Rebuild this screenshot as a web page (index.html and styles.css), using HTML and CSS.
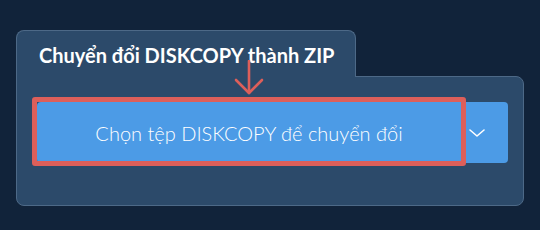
FILE: index.html
```html
<!DOCTYPE html>
<html>

<head>
    <meta charset="utf-8">
    <title>Chuyển đổi DISKCOPY thành ZIP</title>
    <link rel="stylesheet" href="styles.css">
</head>

<body>
    <div class="converter">
        <div class="tab">Chuyển đổi DISKCOPY thành ZIP</div>
        <div class="panel">
            <div class="button-group">
                <button class="pick-button">Chọn tệp DISKCOPY để chuyển đổi</button>
                <button class="menu-button" title="Tùy chọn">
                    <svg width="16" height="8" viewBox="0 0 16 8" fill="none" stroke="#fff" stroke-width="1.6"
                        stroke-linecap="round" stroke-linejoin="round">
                        <polyline points="1 1 8 7 15 1"></polyline>
                    </svg>
                </button>
                <!-- highlight over the main button -->
                <div class="highlight"></div>
                <svg class="hint-arrow" width="30" height="36" viewBox="0 0 30 36" fill="none" stroke="#dd5f5a"
                    stroke-width="2.6" stroke-linecap="round" stroke-linejoin="round">
                    <line x1="15" y1="1" x2="15" y2="33"></line>
                    <polyline points="2 20 15 33 28 20"></polyline>
                </svg>
            </div>
        </div>
    </div>
</body>

</html>
```

FILE: styles.css
```css
body {
    margin: 0;
    background: #11233a;
    font-family: Lato, "Noto Sans", sans-serif;
    height: 230px;
    overflow: hidden;
}

.converter {
    width: 508px;
    padding: 30px 0 0 16px;
}

.tab {
    position: relative;
    z-index: 1;
    width: 340px;
    height: 47px;
    box-sizing: border-box;
    margin-bottom: -1px;
    padding: 12px 0 0 22px;
    background: #2c4a6a;
    border: 1px solid #4d6987;
    border-bottom: none;
    border-radius: 8px 8px 0 0;
    color: #fff;
    font-size: 20px;
    font-weight: 700;
}

.panel {
    height: 130px;
    box-sizing: border-box;
    padding: 25px 15px 0 20px;
    background: #2c4a6a;
    border: 1px solid #4d6987;
    border-radius: 0 8px 8px 8px;
}

.button-group {
    position: relative;
    z-index: 2;
    display: flex;
    flex-direction: row;
}

.pick-button {
    width: 429px;
    height: 61px;
    border: 0;
    padding: 0 5px 0 0;
    background: #4c9be6;
    border-radius: 4px 0 0 4px;
    color: #fff;
    font-family: Lato, "Noto Sans", sans-serif;
    font-size: 20px;
    font-weight: 300;
}

.menu-button {
    display: flex;
    align-items: center;
    width: 42px;
    height: 61px;
    border: 0;
    padding: 0 0 0 3px;
    background: #4c9be6;
    border-radius: 0 4px 4px 0;
}

.highlight {
    position: absolute;
    left: -5px;
    top: -5px;
    width: 434px;
    height: 69px;
    box-sizing: border-box;
    border: 5px solid #dd5f5a;
    border-radius: 3px;
}

.hint-arrow {
    position: absolute;
    left: 197px;
    top: -42px;
}
```
